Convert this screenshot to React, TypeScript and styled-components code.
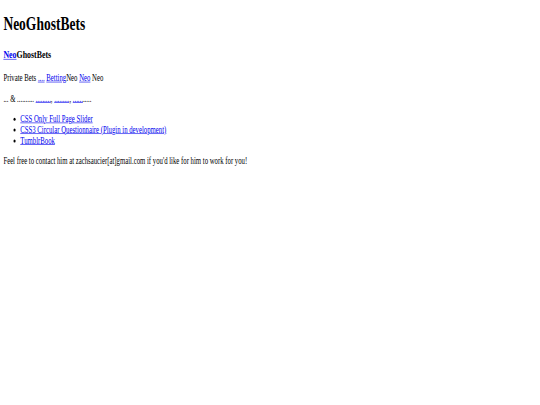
import styled, { createGlobalStyle } from 'styled-components';

const GlobalStyle = createGlobalStyle`
  html, body {
    margin: 0;
    padding: 0;
    background: #fff;
    overflow: hidden;
  }
`;

const Page = styled.div`
  width: 1280px;
  padding: 0 8px;
  box-sizing: border-box;
  font-family: 'Liberation Serif', 'Times New Roman', serif;
  font-size: 16px;
  color: #000;
  transform: scale(0.422, 0.601);
  transform-origin: top left;
  display: flow-root;
`;

const Title = styled.h1`
  font-size: 32px;
  margin: 21.44px 0;
`;

const SubTitle = styled.h3`
  font-size: 18.72px;
  margin: 18.72px 0;
`;

const Para = styled.p`
  margin: 16px 0;
`;

const Link = styled.a`
  color: #0000ee;
  text-decoration: underline;
`;

const List = styled.ul`
  margin: 16px 0;
  padding-left: 40px;
`;

const projects = [
  'CSS Only Full Page Slider',
  'CSS3 Circular Questionnaire (Plugin in development)',
  'TumblrBook',
];

export default function App() {
  return (
    <>
      <GlobalStyle />
      <Page>
        <Title>NeoGhostBets</Title>
        <SubTitle>
          <Link href='#'>Neo</Link>GhostBets
        </SubTitle>
        <Para>
          Private Bets <Link href='#'>....</Link> <Link href='#'>Betting</Link>Neo{' '}
          <Link href='#'>Neo</Link> Neo
        </Para>
        <Para>
          ... &amp; .......... <Link href='#'>.........</Link>,{' '}
          <Link href='#'>.........</Link>, <Link href='#'>......</Link>.....
        </Para>
        <List>
          {projects.map((p) => (
            <li key={p}>
              <Link href='#'>{p}</Link>
            </li>
          ))}
        </List>
        <Para>
          Feel free to contact him at zachsaucier[at]gmail.com if you'd like for him to work for you!
        </Para>
      </Page>
    </>
  );
}
